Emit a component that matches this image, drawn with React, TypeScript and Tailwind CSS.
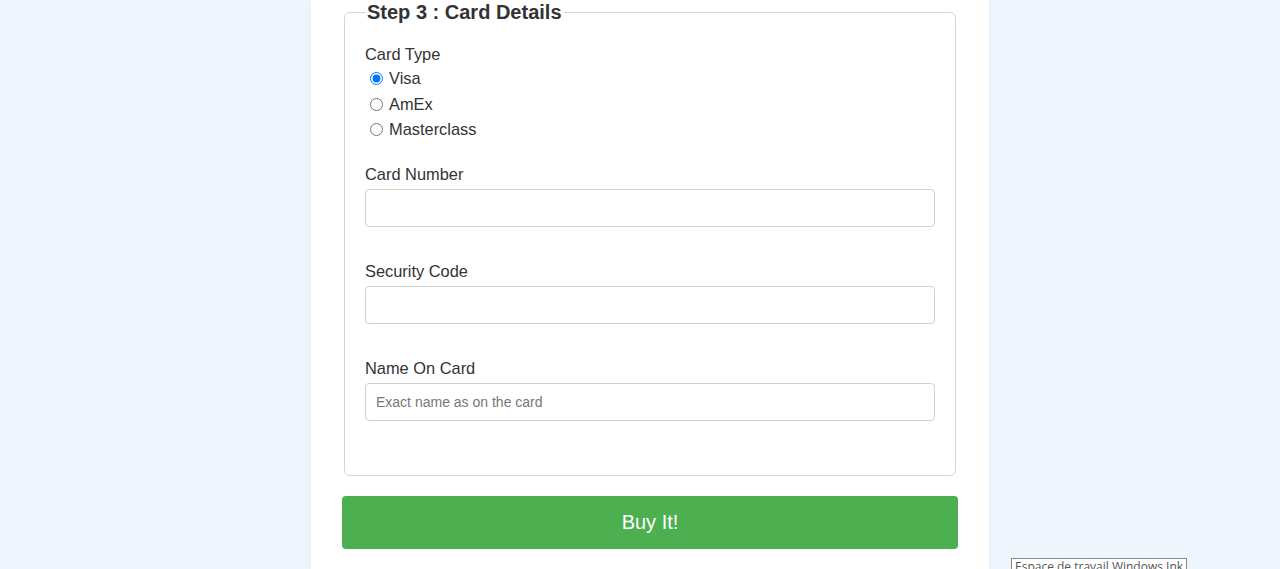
import { useState } from 'react';

const fields = [
  { label: 'Card Number', placeholder: '' },
  { label: 'Security Code', placeholder: '' },
  { label: 'Name On Card', placeholder: 'Exact name as on the card' },
];

const cardTypes = ['Visa', 'AmEx', 'Masterclass'];

const App = () => {
  const [cardType, setCardType] = useState('Visa');

  return (
    <div className="relative h-[569px] overflow-hidden bg-[#eef5fd] pl-5 font-['Liberation_Sans',Arial,sans-serif] text-[#333]">
      <div className="mx-auto h-full w-[678px] bg-white px-[31px] pt-px shadow-[0_0_4px_rgba(0,0,0,0.06)]">
        {/* Card details */}
        <fieldset className="mx-[2px] rounded-[6px] border border-[#d4d4d4] px-5 pb-5 pt-[22px]">
          <legend className="px-[2px] text-[20px] font-bold leading-[22px] text-[#333]">
            Step 3 : Card Details
          </legend>

          <div className="text-[16.4px] leading-[18px]">Card Type</div>
          <div className="mt-[3px]">
            {cardTypes.map((type) => (
              <label key={type} className="flex h-[25.5px] items-center text-[16.4px]">
                <input
                  type="radio"
                  name="cardType"
                  checked={cardType === type}
                  onChange={() => setCardType(type)}
                  className="ml-[5px] mr-[6px] h-[13px] w-[13px]"
                />
                {type}
              </label>
            ))}
          </div>

          <div className="mt-[22px]">
            {fields.map((f, i) => (
              <div key={f.label} className={i > 0 ? 'mt-[35px]' : ''}>
                <div className="text-[16.4px] leading-[18px]">{f.label}</div>
                <input
                  type="text"
                  placeholder={f.placeholder}
                  className="mt-[6px] block h-[38px] w-full rounded-[4px] border border-[#d0d0d0] px-[10px] text-[14px] outline-none placeholder:text-[#777]"
                />
              </div>
            ))}
          </div>
          <div className="h-[34px]" />
        </fieldset>

        <button className="mt-5 h-[53px] w-full rounded-[4px] bg-[#4caf50] text-[20px] text-white">
          Buy It!
        </button>
      </div>

      {/* Windows tooltip */}
      <div className="absolute left-[1011px] top-[558px] whitespace-nowrap border border-[#8a8a8a] bg-white px-[3px] text-[12px] leading-[16px] text-[#555] font-['Open_Sans',sans-serif]">
        Espace de travail Windows Ink
      </div>
    </div>
  );
};

export default App;
